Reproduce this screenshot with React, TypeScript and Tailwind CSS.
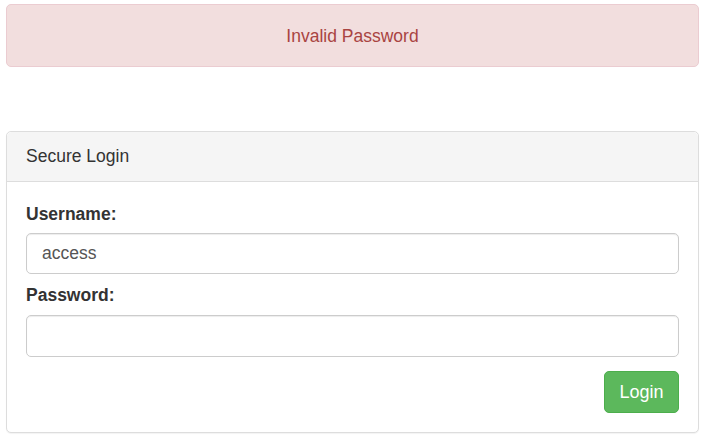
export default function App() {
  return (
    <div className="min-h-screen bg-white px-[6px] pt-[4px] text-[17.5px] text-[#333] [font-family:'Liberation_Sans',Arial,sans-serif]">
      {/* Error alert */}
      <div className="flex h-[63px] w-[693px] items-center justify-center rounded-[5px] border border-[#ebccd1] bg-[#f2dede] pt-[1px] text-[#a94442]">
        Invalid Password
      </div>

      {/* Login panel */}
      <div className="mt-[64px] w-[693px] rounded-[5px] border border-[#ddd] bg-white shadow-[0_1px_1px_rgba(0,0,0,0.05)]">
        <div className="flex h-[50px] items-center rounded-t-[5px] border-b border-[#ddd] bg-[#f5f5f5] px-[19px]">
          Secure Login
        </div>
        <form className="flex flex-col px-[19px] pt-[20px] pb-[19px]" onSubmit={(e) => e.preventDefault()}>
          <label className="mb-[6px] block font-bold leading-[25px]">Username:</label>
          <input
            type="text"
            defaultValue="access"
            className="h-[41px] w-full rounded-[5px] border border-[#ccc] px-[15px] text-[17.5px] text-[#555] shadow-[inset_0_1px_1px_rgba(0,0,0,0.075)] outline-none"
          />
          <label className="mt-[9px] mb-[7px] block font-bold leading-[25px]">Password:</label>
          <input
            type="password"
            className="h-[42px] w-full rounded-[5px] border border-[#ccc] px-[15px] text-[17.5px] text-[#555] shadow-[inset_0_1px_1px_rgba(0,0,0,0.075)] outline-none"
          />
          <div className="mt-[14px] flex justify-end">
            <button
              type="submit"
              className="h-[42px] w-[75px] rounded-[5px] border border-[#4cae4c] bg-[#5cb85c] text-[18px] text-white"
            >
              Login
            </button>
          </div>
        </form>
      </div>
    </div>
  );
}
